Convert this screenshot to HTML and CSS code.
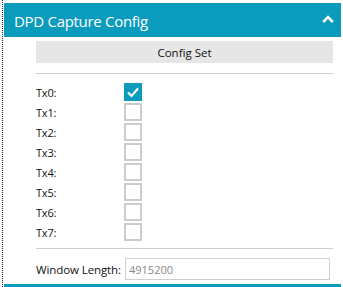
FILE: index.html
```html
<!DOCTYPE html>
<html>
<head>
<meta charset="utf-8">
<link rel="stylesheet" href="styles.css">
</head>
<body>
<div class="frame">
  <div class="panel">
    <div class="header">
      <span class="title">DPD Capture Config</span>
      <svg class="chev" width="12" height="8" viewBox="0 0 12 8"><path d="M1.2 7 L6 2.2 L10.8 7" fill="none" stroke="#fff" stroke-width="2.6"/></svg>
    </div>
    <div class="body">
      <div class="btn">Config Set</div>
      <div class="sep"></div>
      <div class="rows">
        <div class="row"><span class="lbl">Tx0:</span><span class="cb on"><svg width="18" height="18" viewBox="0 0 18 18"><path d="M4 9.5 L7.5 13 L14 5.5" fill="none" stroke="#fff" stroke-width="2.2"/></svg></span></div>
        <div class="row"><span class="lbl">Tx1:</span><span class="cb"></span></div>
        <div class="row"><span class="lbl">Tx2:</span><span class="cb"></span></div>
        <div class="row"><span class="lbl">Tx3:</span><span class="cb"></span></div>
        <div class="row"><span class="lbl">Tx4:</span><span class="cb"></span></div>
        <div class="row"><span class="lbl">Tx5:</span><span class="cb"></span></div>
        <div class="row"><span class="lbl">Tx6:</span><span class="cb"></span></div>
        <div class="row"><span class="lbl">Tx7:</span><span class="cb"></span></div>
      </div>
      <div class="sep sep2"></div>
      <div class="wl">
        <span class="wlbl">Window Length:</span>
        <span class="inp">4915200</span>
      </div>
    </div>
    <div class="footer"></div>
  </div>
</div>
</body>
</html>
```
FILE: styles.css
```css
html, body {
  margin: 0;
  padding: 0;
  background: #fff;
}
body {
  font-family: "Open Sans", "Noto Sans", sans-serif;
  color: #111;
  width: 343px;
  height: 287px;
  overflow: hidden;
}
.frame {
  margin-left: 2px;
  border-left: 1px dotted #222;
  height: 287px;
  padding-left: 1px;
  padding-top: 3px;
  box-sizing: border-box;
}
.panel {
  width: 337px;
}
.header {
  height: 34px;
  background: #0a9bbd;
  display: flex;
  align-items: center;
  justify-content: space-between;
  padding: 0 7px 0 10px;
  color: #fff;
}
.title {
  font-size: 15px;
  letter-spacing: -0.3px;
  margin-top: 1px;
}
.chev {
  margin-top: -2px;
}
.body {
  padding: 4px 8px 0 32px;
}
.btn {
  height: 22px;
  background: #e6e6e6;
  font-size: 11.5px;
  display: flex;
  align-items: center;
  justify-content: center;
}
.sep {
  height: 1px;
  background: #cfcfcf;
  margin-top: 10px;
}
.rows {
  padding-top: 8px;
}
.row {
  display: flex;
  align-items: center;
  height: 20px;
}
.lbl {
  width: 88px;
  font-size: 11px;
  letter-spacing: -0.2px;
}
.cb {
  width: 18px;
  height: 18px;
  box-sizing: border-box;
  border: 2px solid #cccccc;
  display: block;
}
.cb.on {
  border: none;
  background: #0a9bbd;
}
.cb svg {
  display: block;
}
.sep2 {
  margin-top: 6px;
}
.wl {
  display: flex;
  align-items: center;
  margin-top: 9px;
  height: 22px;
}
.wlbl {
  width: 89px;
  font-size: 11.5px;
  letter-spacing: -0.1px;
}
.inp {
  width: 205px;
  height: 22px;
  box-sizing: border-box;
  border: 1px solid #cfcfcf;
  font-size: 11px;
  color: #888;
  padding-left: 3px;
  display: flex;
  align-items: center;
}
.footer {
  margin-top: 4px;
  height: 4px;
  background: #0a9bbd;
}
```
